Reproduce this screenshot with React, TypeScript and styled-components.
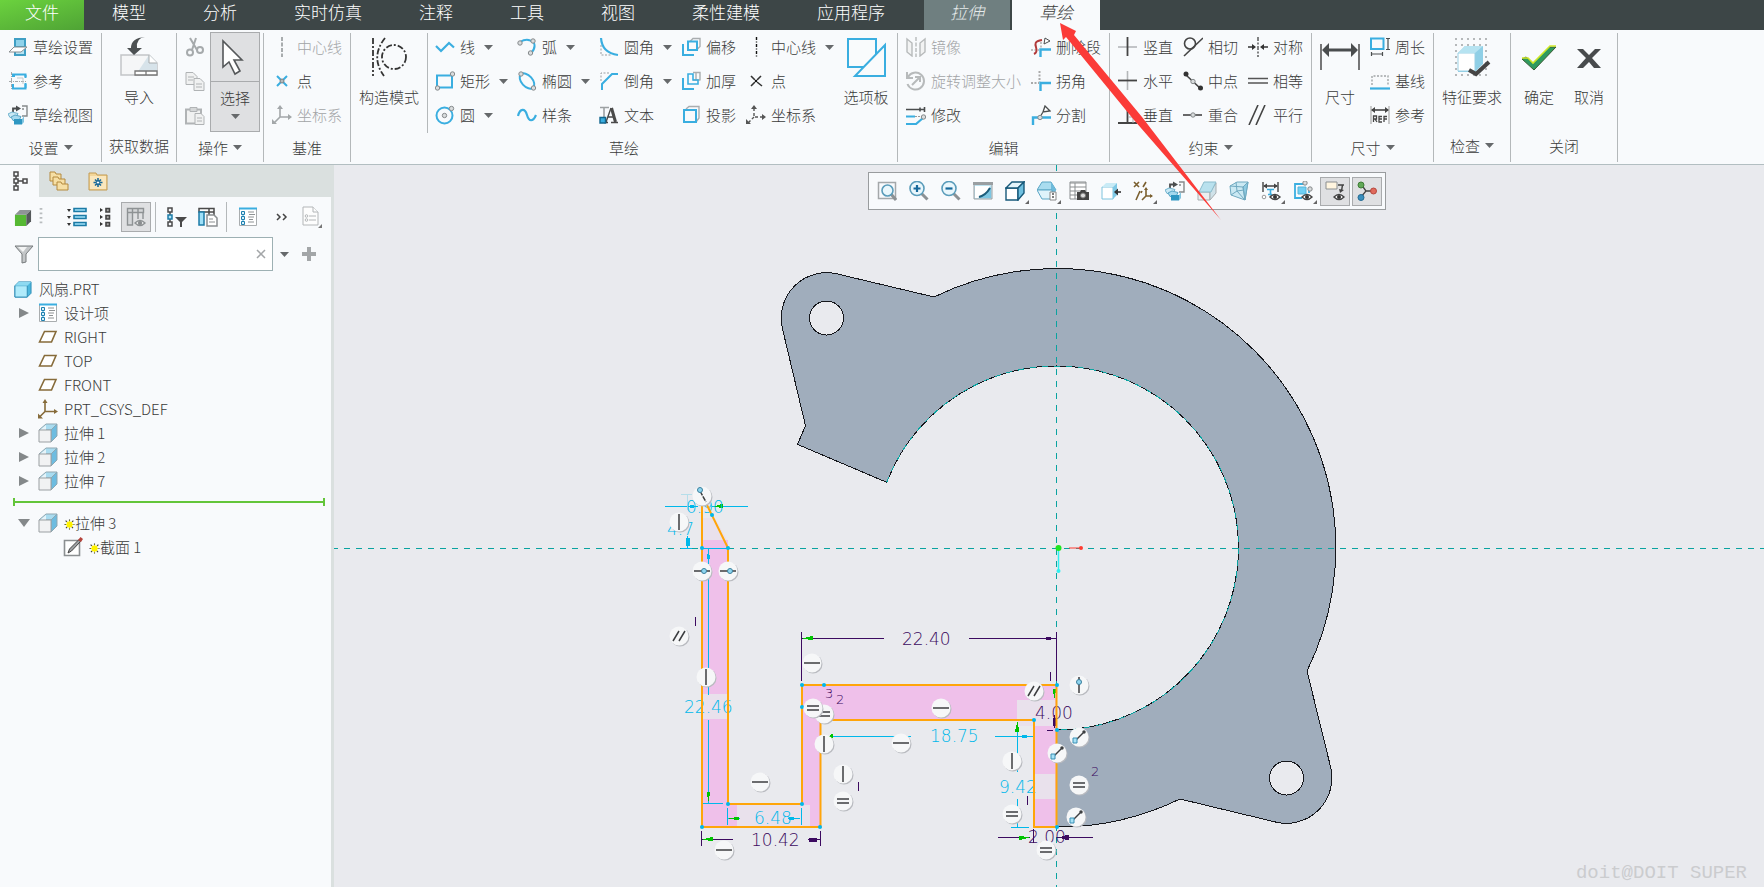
import React from "react";
import styled, { createGlobalStyle, css } from "styled-components";

const INK = "#4a4d4e";
const BLUE = "#3aaee0";
const TEAL = "#0aa3a0";
const PURPLE = "#3c0a60";
const CYAN = "#00b8ea";
const ORANGE = "#ffa50a";
const GREEN = "#00c400";

const GlobalStyle = createGlobalStyle`
  * { box-sizing: border-box; }
  body {
    margin: 0;
    background: #e9eaee;
    color: #3a3a3a;
    font-family: "Noto Sans CJK SC", "Noto Sans", sans-serif;
    font-size: 15px;
    font-weight: 300;
    line-height: 24px;
  }
  button, input { font: inherit; color: inherit; }
  button {
    margin: 0;
    padding: 0;
    border: 0;
    background: none;
    cursor: pointer;
    white-space: nowrap;
  }
  svg { display: block; flex: none; }
`;

/* ---------- icons ---------- */

const cube = (front: string, top: string, side: string, edge: string) => (
  <g stroke={edge} strokeWidth="1.400">
    <path d="M1 7h12v12H1z" fill={front} />
    <path d="M1 7l6-6h12l-6 6z" fill={top} />
    <path d="M13 7l6-6v11l-6 7z" fill={side} />
  </g>
);

const extrudeCube = (
  <g strokeWidth="1">
    <path d="M13 7l6-6v12l-6 6z" fill="#6dbce0" stroke="#8fa7b1" />
    <path d="M1 7l7-6h11l-6 6z" fill="#a9dcf0" stroke="#8fa7b1" />
    <path d="M2 7l6-5v5z" fill="#e6f4f9" />
    <path d="M1 7h12v12H1z" fill="#f1f2f3" stroke="#9a9fa2" />
  </g>
);

const eye = (
  <g>
    <path d="M9 16q5-5 10 0q-5 5-10 0z" fill="#fff" stroke="#444" strokeWidth="1.4" />
    <circle cx="14" cy="16" r="2" fill="#333" />
  </g>
);

const viewCubes = (
  <g fill="none">
    <path d="M5 7V3.500h5" stroke={INK} strokeWidth="1.800" />
    <path d="M8 0.500l5 3-5 3z" fill={INK} />
    <path d="M14 1h5v10h-5M14 4h2" stroke="#85898b" strokeWidth="1.4" />
    <path d="M0 9l4-2 6 1.500-2 4H2z" fill="#c9e8f4" stroke="#6fb2cd" />
    <path d="M3 12l4-2 6 1.500-2 4H5z" fill="#a5d9ee" stroke="#5ba6c5" />
    <path d="M6 14h8v5.500H6z" fill="#2f97c2" />
    <path d="M14 14l2-3v6l-2 2.500z" fill="#82c5e0" />
  </g>
);

const ball = (x: number, y: number) => (
  <circle cx={x} cy={y} r="2.2" fill="#d9dcdd" stroke="#85898b" strokeWidth="1" />
);

const magnifier = (
  <g fill="none">
    <path d="M12 12l6.500 6.500" stroke="#8c9194" strokeWidth="3" />
    <circle cx="8" cy="7.500" r="7" fill="#eaf7fc" stroke="#5a9cba" strokeWidth="1.6" />
  </g>
);

const designList = (
  <g>
    <path d="M1.500 1.500h17v17h-17z" fill="#fff" stroke="#a9adaf" />
    <path d="M1 1.500h18" stroke={BLUE} strokeWidth="2" />
    <path d="M5 4v13" stroke={BLUE} />
    <path d="M3.500 4.500h3v3h-3zM3.500 9.500h3v3h-3zM3.500 14.500h3v3h-3z" fill="#d8f1fb" stroke="#1e7fae" />
    <path d="M10 5h6M11 7.500h6M10 10h6M11 12.500h4M10 15h6" stroke="#8e9294" />
  </g>
);

const ICONS: Record<string, React.ReactNode> = {
  sketchSetup: (
    <g>
      <path d="M6 1h12v18H6z" fill="#3f9fc4" />
      <path d="M8 3h8v6H8z" fill="#8fd2ea" />
      <path d="M8 13h8v4H8z" fill="#b8e3f2" />
      <path d="M1 15l5-5h13l-6 5z" fill="#fff" stroke="#8b8f91" />
    </g>
  ),
  reference: (
    <g fill="none">
      <path d="M3.500 1v18M1 10.500h18" stroke="#a4a8aa" strokeDasharray="3 1 1 1" />
      <path d="M5 6V3.500h12.500V6M5 13v4.500h12.500V13" stroke={BLUE} strokeWidth="2" />
      <path d="M17.500 4v3M17.500 12v5M6 4v2" stroke={BLUE} strokeWidth="2" />
      <path d="M9 7h6v6" stroke="#c5c9cb" />
    </g>
  ),
  views: viewCubes,
  cut: (
    <g fill="none" stroke="#a6aaac" strokeWidth="2">
      <path d="M5 1l7 12M11 1l-4 12" />
      <circle cx="5" cy="15.500" r="3" />
      <circle cx="15" cy="13" r="3" />
    </g>
  ),
  copy: (
    <g fill="#f0f1f1" stroke="#b0b3b5">
      <path d="M1 1.500h7l4 4v8H1z" />
      <path d="M9 7.500h6l4 4v8H9z" />
      <path d="M3 6h6M3 9h5M11 13h6M11 16h6" />
    </g>
  ),
  paste: (
    <g fill="#f0f1f1" stroke="#b0b3b5">
      <path d="M1 4.500h15v14H1z" strokeWidth="2" />
      <path d="M5 2.500h7v4H5z" fill="#d5d7d8" />
      <path d="M10 8.500h6l3 3v8h-9z" />
      <path d="M12 13h5M12 16h5" />
    </g>
  ),
  centerDash: <path d="M10 0v20" stroke="#a8acae" strokeWidth="2" strokeDasharray="4 1.500" />,
  centerLine: <path d="M10.500 0v20" stroke="#111" strokeWidth="1.400" strokeDasharray="3 1.500 1 1.500" />,
  bluePoint: (
    <g strokeWidth="2" stroke={BLUE}>
      <path d="M5 5l10 10M15 5L5 15" />
      <circle cx="10" cy="10" r="2" fill="#b5b9bb" stroke="#7e8385" strokeWidth="1" />
    </g>
  ),
  point: (
    <g strokeWidth="1.600" stroke="#333">
      <path d="M5 5l4 4M11 11l5 4M15 5l-4 4M9 11l-4 4" />
      <path d="M9 9h2v2H9z" fill="#111" stroke="none" />
    </g>
  ),
  csysGrey: (
    <g fill="none" stroke="#a3a7a9" strokeWidth="1.600">
      <path d="M8 3v9h9M8 12l-6 6" />
      <path d="M8 0l3 4H5zM20 12l-4-3v6zM0 19v-5l5 5z" fill="#a3a7a9" stroke="none" />
    </g>
  ),
  csys: (
    <g fill="none" stroke="#555" strokeWidth="1.400">
      <path d="M8 3v9h9M8 12l-6 6" strokeDasharray="3 2" />
      <path d="M8 0l3 4H5zM20 12l-4-3v6zM0 19v-5l5 5z" fill="#555" stroke="none" />
    </g>
  ),
  csysBrown: (
    <g fill="none" stroke="#866b3a" strokeWidth="1.600">
      <path d="M7 3v9.500h10M7 12.500l-6 6" />
      <path d="M7 0l2.500 4h-5zM20 12.500l-4-2.500v5zM0 19.500v-5l5 5z" fill="#866b3a" stroke="none" />
    </g>
  ),
  line: <path d="M1 9l5 5 8-8 5 4.500" fill="none" stroke={BLUE} strokeWidth="2.200" />,
  rect: (
    <g>
      <path d="M2 4.500h15v12H2z" fill="none" stroke={BLUE} strokeWidth="2" />
      {ball(17.5, 3)}
      {ball(2.5, 17)}
    </g>
  ),
  circle: (
    <g>
      <circle cx="9.500" cy="10.500" r="8" fill="none" stroke={BLUE} strokeWidth="2" />
      {ball(9.5, 10.5)}
      {ball(16.5, 3.5)}
    </g>
  ),
  arc: (
    <g>
      <path d="M3 5q8-5 14 1q2 5-3 10" fill="none" stroke={BLUE} strokeWidth="2" />
      {ball(3, 6)}
      {ball(16, 4)}
      {ball(13.5, 16)}
    </g>
  ),
  ellipse: (
    <g>
      <ellipse cx="10" cy="10" rx="9" ry="5.500" transform="rotate(48 10 10)" fill="none" stroke={BLUE} strokeWidth="2" />
      {ball(4, 3)}
      {ball(16.5, 17)}
    </g>
  ),
  spline: <path d="M1 11c2-8 7-8 9-1s6 7 9 0" fill="none" stroke={BLUE} strokeWidth="2.200" />,
  fillet: (
    <g fill="none">
      <path d="M2 8v10h10" stroke="#999da0" strokeDasharray="2 1.500" />
      <path d="M2 1q1 15 17 17" stroke={BLUE} strokeWidth="2.200" />
    </g>
  ),
  chamfer: (
    <g fill="none">
      <path d="M2 10V2h8" stroke="#999da0" strokeDasharray="2 1.500" />
      <path d="M3 19v-6L13 3h6" stroke={BLUE} strokeWidth="2" />
    </g>
  ),
  textTool: (
    <g fill="none">
      <path d="M1 2.500h9M5 2.500v10" stroke="#9da1a3" strokeWidth="1.600" />
      <path d="M7 17L12 3M9 12h6M5 17.500h4M12 17.500h7" stroke="#4a4a4a" strokeWidth="1.400" />
      <path d="M12.500 3l4 14" stroke="#4a4a4a" strokeWidth="3" />
      <path d="M1 12.500h5.500V18H1z" fill={BLUE} stroke="#13678f" strokeWidth="1.400" />
    </g>
  ),
  offset: (
    <g fill="none">
      <path d="M9 4.500l3-3h7v8l-3 3" stroke="#a9adaf" strokeWidth="1.400" />
      <path d="M7 4.500h9V13H7z" stroke={BLUE} strokeWidth="2" />
      <path d="M2 7v11h11" stroke={BLUE} strokeWidth="2" />
    </g>
  ),
  thicken: (
    <g fill="none">
      <path d="M12 1.500h7v8M15 2v7M12 9h7" stroke="#a9adaf" strokeWidth="1.400" />
      <path d="M7 3v10h10V9h-5V3z" stroke={BLUE} strokeWidth="1.600" />
      <path d="M2 7v11h11" stroke={BLUE} strokeWidth="2" />
    </g>
  ),
  project: (
    <g fill="none">
      <path d="M5 4l3-2.500h10V13l-3 4" stroke="#a9adaf" strokeWidth="1.400" />
      <path d="M3 5h12v12H3z" stroke={BLUE} strokeWidth="2" />
    </g>
  ),
  mirror: (
    <g fill="#f2f3f3" stroke="#b7babb" strokeWidth="1.400">
      <path d="M1 2l5 4v13l-5-4zM19 2l-5 4v13l5-4z" />
      <path d="M10 0v20" strokeDasharray="4 1.500" />
    </g>
  ),
  rotate: (
    <g fill="none" stroke="#b7babb" strokeWidth="2">
      <path d="M2 6a8.500 8.500 0 1 1-.5 7" />
      <path d="M1 1v6h6M6 14l8-8M9 6h5v5" />
    </g>
  ),
  modify: (
    <g fill="none">
      <path d="M0 4.500h18M18.500 2v5M14 2.500v4" stroke={INK} strokeWidth="1.600" />
      <path d="M0 11.500h9M0 19h10l7-6" stroke={BLUE} strokeWidth="2.200" />
      <path d="M9 11.500h8" stroke="#999" strokeDasharray="2 1" />
      {ball(17.5, 12)}
    </g>
  ),
  deleteSeg: (
    <g fill="none">
      <path d="M0 13h8M10 5v6" stroke="#aaa" strokeDasharray="2 1.500" strokeWidth="1.400" />
      <path d="M3 17c8-4-6-12 8-14" stroke="#b23a3a" strokeWidth="2" />
      <path d="M20 12.500H9.500V20" stroke={BLUE} strokeWidth="2.400" />
      <path d="M14 1l5 3-6 3z" fill="#fff" stroke={INK} />
    </g>
  ),
  corner: (
    <g fill="none">
      <path d="M0 12h8M8.500 0v11" stroke="#aaa" strokeDasharray="2 1.500" strokeWidth="2" />
      <path d="M20 12H9.500v8" stroke={BLUE} strokeWidth="2.400" />
    </g>
  ),
  divide: (
    <g fill="none">
      <path d="M20 12.500H2V20" stroke={BLUE} strokeWidth="2.400" />
      <path d="M14 1l5 5-7 1zM12 7l-3 5" fill="#fff" stroke={INK} strokeWidth="1.300" />
      {ball(9, 12.5)}
    </g>
  ),
  vertical: (
    <g>
      <path d="M0 10h19" stroke="#b4b7b9" strokeWidth="1.600" />
      <path d="M9.500 0v19" stroke="#444" strokeWidth="1.800" />
    </g>
  ),
  horizontal: (
    <g>
      <path d="M9.500 0v19" stroke="#b4b7b9" strokeWidth="1.600" />
      <path d="M0 9.500h19" stroke="#444" strokeWidth="1.800" />
    </g>
  ),
  perpendicular: (
    <g fill="none">
      <path d="M0 18h19M9.500 1v17" stroke="#444" strokeWidth="1.800" />
      <path d="M10 12h5v6" stroke="#a5a9ab" />
    </g>
  ),
  tangent: (
    <g fill="none" stroke="#444" strokeWidth="1.600">
      <circle cx="7" cy="6.500" r="5.500" />
      <path d="M1 19L20 1" />
    </g>
  ),
  midpoint: (
    <g>
      <path d="M3 4l15 14" stroke="#444" strokeWidth="1.600" />
      <circle cx="3" cy="3" r="2.500" fill="#333" />
      <circle cx="17.500" cy="17" r="2.500" fill="#333" />
      {ball(10, 10.5)}
    </g>
  ),
  coincident: (
    <g>
      <path d="M0 10h19" stroke="#444" strokeWidth="1.600" />
      {ball(10, 10)}
    </g>
  ),
  symmetric: (
    <g stroke="#333" strokeWidth="1.600">
      <path d="M10 0v20" strokeDasharray="4 1.500 2 1.500" strokeWidth="1.200" />
      <path d="M0 10h6M14 10h6" />
      <path d="M8 10L4 7v6zM12 10l4-3v6z" fill="#333" stroke="none" />
    </g>
  ),
  equal: <path d="M0 7.500h20M0 12h20" stroke="#555" strokeWidth="1.600" />,
  parallel: <path d="M1 20L10 0M8 20L17 0" stroke="#444" strokeWidth="1.600" />,
  perimeter: (
    <g fill="none">
      <path d="M1 1.500h12.500V12H1z" stroke={BLUE} strokeWidth="2" />
      <path d="M18 1v12M16 1.500h4M16 12.500h4M1 17h12M1.500 15v4M12.500 15v4" stroke={INK} strokeWidth="1.200" />
    </g>
  ),
  baseline: (
    <g>
      <path d="M2 14V5h16v9" fill="none" stroke="#a0a4a6" strokeDasharray="2 1.500" strokeWidth="1.400" />
      <path d="M0 17.500h20" stroke={BLUE} strokeWidth="2.200" />
    </g>
  ),
  refDim: (
    <g fill="none" stroke="#444">
      <path d="M1 1v18M19 1v18" stroke="#999" />
      <path d="M2 5h16" strokeWidth="1.600" />
      <path d="M1 5l4-3v6zM19 5l-4-3v6z" fill="#444" stroke="none" />
      <path d="M3.500 17v-6h3v3h-3M5 14l2 3M12 11.500H9V17h3M9 14h3M17 11.500h-3V17M14 14h3" strokeWidth="1.300" />
    </g>
  ),
  zoomFit: (
    <g>
      <path d="M1.500 1.500h17v16h-17z" fill="none" stroke="#a4a8aa" strokeWidth="1.500" />
      <path d="M14 13l5 6" stroke="#8c9194" strokeWidth="3" />
      <circle cx="10.500" cy="9.500" r="5.500" fill="#eaf7fc" stroke="#5a9cba" strokeWidth="1.600" />
    </g>
  ),
  zoomIn: (
    <g>
      {magnifier}
      <path d="M4.500 7.500h7M8 4v7" stroke="#17699b" strokeWidth="2.200" />
    </g>
  ),
  zoomOut: (
    <g>
      {magnifier}
      <path d="M4.500 7.500h7" stroke="#17699b" strokeWidth="2.200" />
    </g>
  ),
  refit: (
    <g>
      <path d="M1 2h18v16H1z" fill="#bfe3f0" stroke="#9a9fa2" />
      <path d="M0 2.500h20" stroke="#9a9fa2" strokeWidth="3" />
      <path d="M2 5h15Q12 15 6 17H2z" fill="#fff" />
      <path d="M5 17q8-3 13-11v11z" fill="#7cc6e2" />
      <path d="M6 16q7-2 11-9" fill="none" stroke="#1d5d7a" strokeWidth="2" />
    </g>
  ),
  shadedBox: <g>{cube("#fff", "#e4f5fb", "#6fc0e0", "#17597a")}</g>,
  savedView: (
    <g>
      <path d="M5 1h9l5 8H0z" fill="#a9dcef" stroke="#5ba6c5" />
      <path d="M14 1l5 8-3 9-2-9z" fill="#6dbadb" />
      <path d="M0 9h15v9H5z" fill="#dff3fa" stroke="#5ba6c5" />
      <path d="M13 11h6v8h-6z" fill="#fff" stroke="#888" />
      <path d="M15 13h2M15 16h2" stroke="#555" strokeWidth="1.500" />
    </g>
  ),
  camera: (
    <g>
      <path d="M1 1h16v17H1z" fill="#fff" stroke="#8b8f91" />
      <path d="M1 2h16M1 6h16M1 10h16M1 14h8M6 2v16" fill="none" stroke="#8b8f91" />
      <path d="M8 11h3l1-2h4l1 2h3v8H8z" fill="#444" />
      <circle cx="14" cy="14.500" r="2.500" fill="#ddd" stroke="#777" />
    </g>
  ),
  boxArrow: (
    <g>
      <path d="M1 6h11v12H1z" fill="#fff" stroke="#7fc4de" />
      <path d="M1 6l4-4h11l-4 4z" fill="#c9ebf6" />
      <path d="M12 6l4-4v12l-4 4z" fill="#7fc9e6" />
      <path d="M14 11h6" stroke="#333" strokeWidth="1.600" />
      <path d="M13 11l4-3.500v7z" fill="#333" />
    </g>
  ),
  datum: (
    <g stroke="#7a5f2f" strokeWidth="1.600" fill="none">
      <path d="M1 1l5 5M6 1L1 6M13 1l-3 5M7 10l-4 9" />
      <path d="M13 8v7h6M13 15l-4 4M9 10l-1 2" />
      <path d="M13 6l2 3h-4zM20 15l-3-2v4z" fill="#7a5f2f" stroke="none" />
    </g>
  ),
  ghostBox: (
    <g>
      <path d="M1 11h12v8H1z" fill="#eceef0" stroke="#a7adb0" />
      <path d="M13 11l6-9v10l-6 7z" fill="#cfe2e9" stroke="#a7adb0" />
      <path d="M7 1h12l-5 10H2z" fill="#b9e1ee" stroke="#8bbccc" />
    </g>
  ),
  glassBox: (
    <g stroke="#6fa9c0">
      <path d="M1 5l7-4h11l-3 18-14-5z" fill="#cbe9f3" />
      <path d="M14 6l5-5-3 18z" fill="#8fcbe2" />
      <path d="M1 5l13 1 2 13M7 1l1 9 7 8M2 14l6-4 7-1" fill="none" />
    </g>
  ),
  dimEye: (
    <g>
      <path d="M2 1v10M17 1v10M3 5h13" stroke="#444" strokeWidth="1.400" />
      <path d="M2 5l4-2.500v5zM17 5l-4-2.500v5z" fill="#444" />
      <path d="M6 8.500h7M9.500 8.500V14M7 13.500h4" stroke={BLUE} strokeWidth="1.600" />
      <circle cx="3" cy="16" r="1.800" fill="#fff" stroke="#999" />
      {eye}
    </g>
  ),
  constraintEye: (
    <g fill="none">
      <path d="M12 3H2v14h7M16 6v6" stroke={BLUE} strokeWidth="1.800" />
      <path d="M5 6h8v7H5z" fill="#6fd0f5" stroke="#58b3d6" />
      {ball(12, 2)}
      {ball(17, 8)}
      {eye}
    </g>
  ),
  annotEye: (
    <g fill="none">
      <path d="M1 1h11v7H1z" fill="#fff5df" stroke="#8b8f91" />
      <path d="M13 4h6M17.500 4l-1 6" stroke="#444" strokeWidth="1.500" />
      <path d="M14 8l5 1-4 3z" fill="#444" />
      {eye}
    </g>
  ),
  spin: (
    <g>
      <path d="M4 3l5 7-5 6M9 10h7" fill="none" stroke="#444" strokeWidth="1.300" />
      <circle cx="4" cy="4" r="3" fill="#62a957" stroke="#3e7c36" />
      <circle cx="16.500" cy="10" r="3" fill="#e06a5c" stroke="#b5483c" />
      <circle cx="4" cy="16.500" r="3" fill="#3a8fbd" stroke="#236a92" />
    </g>
  ),
  treeTab: (
    <g fill="none" stroke="#4a4a4a" strokeWidth="1.500">
      <path d="M4 1h4v4H4zM4 8h4v4H4zM4 15h4v4H4zM13 8h4v4h-4zM6 5v3M6 12v3M8 10h5" />
    </g>
  ),
  folders: (
    <g stroke="#b48a3e" fill="#f6dfa4">
      <path d="M1 1h5l1 2h5v7H1z" />
      <path d="M4 6h5l1 2h6v6H4z" />
      <path d="M8 11h4l1 2h6v6H8z" />
    </g>
  ),
  favFolder: (
    <g>
      <path d="M1 2h7l1 2h10v15H1z" fill="#f3d699" stroke="#c39b52" />
      <path d="M2 5h16v13H2z" fill="#fae7bd" />
      <path d="M10 7v9M5.500 11.500h9M7 8.500l6 6M13 8.500l-6 6" stroke="#1b6a98" strokeWidth="1.600" />
      <circle cx="10" cy="11.500" r="1.600" fill="#fff" stroke="#1b6a98" />
    </g>
  ),
  greenBox: (
    <g>
      <path d="M1 7h12v12H1z" fill="#56b833" />
      <path d="M1 7l5-5h12l-5 5z" fill="#8f9496" />
      <path d="M13 7l5-5v12l-5 5z" fill="#55595b" />
    </g>
  ),
  dots: <path d="M10 0v20" stroke="#b9bdbf" strokeWidth="3" strokeDasharray="2 3" />,
  expandAll: (
    <g>
      <path d="M0 2h4L2 5zM0 9h4l-2 3zM0 16h4l-2 3z" fill="#333" />
      <path d="M7 1.500h12v3H7zM7 8.500h12v3H7zM7 15.500h12v3H7z" fill="#9fe0f8" stroke="#1c7ba6" strokeWidth="1.600" />
    </g>
  ),
  collapseAll: (
    <g>
      <path d="M5 1l3 2-3 2zM5 8l3 2-3 2zM5 15l3 2-3 2z" fill="#333" />
      <path d="M11 1.500h3.500v3.500H11zM11 8.500h3.500V12H11zM11 15.500h3.500V19H11z" fill="#aaa" stroke="#444" strokeWidth="1.600" />
    </g>
  ),
  columnsEye: (
    <g fill="none" stroke="#8e9294" strokeWidth="1.400">
      <path d="M1.500 1.500h16v4h-16zM1.500 5v13h5V5M12 2v10M17 5v7M6.500 2v4" fill="#d4d6d8" />
      <path d="M9 16q5-5 10 0q-5 5-10 0z" fill="#eee" />
      <circle cx="14" cy="16" r="1.500" fill="#888" />
    </g>
  ),
  treeFilter: (
    <g fill="none" stroke="#4a4a4a" strokeWidth="1.500">
      <path d="M1 1h4v4H1zM1 15h4v4H1zM3 5v3M3 12v3" />
      <path d="M1 8h4v4H1z" fill="#aee4f8" stroke="#1c7ba6" />
      <path d="M8 10h12l-5 5v5h-2v-5z" fill="#4a4a4a" stroke="none" />
    </g>
  ),
  treeColumns: (
    <g fill="#fff" stroke="#4a4a4a" strokeWidth="1.500">
      <path d="M1 1.500h15V5H1zM11 2v6M16 2v6" />
      <path d="M1 5h5v13H1z" fill="#9fe0f8" stroke="#1c7ba6" />
      <path d="M9 8h7l3 3v8H9z" stroke="#8b8f91" />
      <path d="M11 12h4M11 15h6" stroke="#8b8f91" strokeWidth="1" />
    </g>
  ),
  designItems: designList,
  report: (
    <g fill="#fdfdfd" stroke="#b3b6b8">
      <path d="M2 1h10l5 5v13H2z" />
      <path d="M12 1v5h5M8 10h7M8 14h7" />
      <circle cx="5.500" cy="10" r="1.300" />
      <circle cx="5.500" cy="14" r="1.300" />
    </g>
  ),
  funnel: (
    <g>
      <path d="M1 2h18l-7 8v8l-4 1v-9z" fill="#c3c6c8" stroke="#777b7d" />
      <path d="M4 3h9l-4 5z" fill="#f3f4f4" />
    </g>
  ),
  part: (
    <g stroke="#2d8db5">
      <path d="M1 6l4-4h13v12l-4 4H1z" fill="#4db8de" />
      <path d="M1 6h13v12H1z" fill="#b0ebfb" />
      <path d="M1 6l4-4h13l-4 4z" fill="#8edaf2" stroke="none" />
    </g>
  ),
  plane: <path d="M1.500 15L6.500 4.500h11.500L13.500 15z" fill="#fff" stroke="#866b3a" strokeWidth="1.600" />,
  extrude: extrudeCube,
  sketch: (
    <g>
      <path d="M1.500 3.500h15v15h-15z" fill="#fff" stroke="#8b8f91" strokeWidth="1.600" />
      <path d="M5 16l1.500-4L15.500 3l2 1.500L8.500 14z" fill="#9da1a3" stroke="#444" />
      <path d="M15 3l2.500-3L20 2l-2 3z" fill="#b5443c" />
    </g>
  ),
  star: (
    <g>
      <path d="M10 1v18M1 10h18M3 3l14 14M17 3L3 17" stroke="#333" strokeWidth="2" strokeDasharray="3 1" />
      <path d="M5 5h10v10H5zM10 2l3 8-3 8-3-8zM2 10l8-3 8 3-8 3z" fill="#fff200" />
    </g>
  ),
  importBig: (
    <g>
      <path d="M2 18h28l8 8v12H2z" fill="#f5f6f7" stroke="#c2c5c7" strokeWidth="1.500" />
      <path d="M30 18l8 8v8L18 36z" fill="#d7e3ea" />
      <path d="M30 18v8h8" fill="#fff" stroke="#a7abad" />
      <path d="M16 34h22v4H16zM27 34v4" fill="#fff" stroke="#777" strokeWidth="1.300" />
      <path d="M26 0q-9 1-8 11h5l-8 7-7-7h4q0-10 14-11z" fill="#4c5052" />
    </g>
  ),
  selectBig: (
    <path d="M8 4v26l6-5 6 12 5-3-6-11h8z" fill="#fff" stroke="#55585a" strokeWidth="1.600" />
  ),
  constructBig: (
    <g fill="none" stroke="#333" strokeWidth="1.800" strokeDasharray="6 2 2 2">
      <path d="M4 1v38M16 1Q1 20 15 39" />
      <circle cx="25" cy="20" r="12" />
    </g>
  ),
  paletteBig: (
    <g fill="#f9fbfc" stroke={BLUE} strokeWidth="2">
      <path d="M2 2h28v28H2z" />
      <path d="M39 8v31H9z" />
    </g>
  ),
  dimBig: (
    <g>
      <path d="M1 7v26M39 7v26" stroke="#555" strokeWidth="1.600" />
      <path d="M8 13h24" stroke="#4a4d4e" strokeWidth="3" />
      <path d="M2 13l7-7v14zM38 13l-7-7v14z" fill="#4a4d4e" />
    </g>
  ),
  checkReqBig: (
    <g>
      <path d="M3 2h36M3 8h36M3 14h36M3 20h36M3 26h36M3 32h36M3 38h36" stroke="#b5b8ba" strokeWidth="2" strokeDasharray="2 4" />
      <path d="M6 16l7-7h18v18l-8 8H6z" fill="#8fcfe6" />
      <path d="M6 16h17v18H6z" fill="#fff" stroke="#9ad0e4" />
      <path d="M6 16l7-7h18l-8 7z" fill="#b6e3f1" />
      <path d="M17 33l7 4 13-12" fill="none" stroke="#444" strokeWidth="4" />
    </g>
  ),
  okBig: (
    <g>
      <path d="M3 22l4-2 7 6L30 10h7L15 33z" fill="#2f9a5f" stroke="#3a5a33" strokeWidth="1" />
      <path d="M3 21h6l5 5L31 9h6" fill="none" stroke="#cfe82a" strokeWidth="1.600" />
    </g>
  ),
  cancelBig: <path d="M8 12h6l6 6 6-6h6l-9 9 9 10h-7l-5-6-6 6H8l9-10z" fill="#484b4d" />,
};

const Icon = ({ name, size = 20, box = 20 }: { name: string; size?: number; box?: number }) => (
  <svg width={size} height={size} viewBox={`0 0 ${box} ${box}`} aria-hidden="true">
    {ICONS[name]}
  </svg>
);

const Caret = () => (
  <svg width="9" height="5" viewBox="0 0 9 5" aria-hidden="true">
    <path d="M0 0h9L4.500 5z" fill="#66696b" />
  </svg>
);

/* ---------- tab bar ---------- */

const Page = styled.div`
  position: relative;
  display: flex;
  flex-direction: column;
  min-height: 100vh;
  overflow: hidden;
`;

const TabBar = styled.nav`
  display: flex;
  height: 30px;
  gap: 1px;
  background: #3d4647;
`;

type TabKind = "file" | "plain" | "context" | "active";

const Tab = styled.button<{ $kind: TabKind }>`
  padding: 0 28px 6px;
  font-size: 17px;
  line-height: 24px;
  color: #fff;
  ${(p) => p.$kind === "file" && css`
    margin-right: -1px;
    padding: 0 25px 6px;
    background: linear-gradient(165deg, #6bd23e, #4fa335);
  `}
  ${(p) => p.$kind === "context" && css`
    margin: 0 1px 0 10px;
    padding: 0 26px 6px;
    background: #6f7f80;
    color: #e6ebeb;
    font-style: italic;
  `}
  ${(p) => p.$kind === "active" && css`
    padding: 0 27px 6px;
    background: #f8fafc;
    color: #3a3a3a;
    font-style: italic;
  `}
`;

const TABS: [string, TabKind][] = [
  ["文件", "file"], ["模型", "plain"], ["分析", "plain"], ["实时仿真", "plain"],
  ["注释", "plain"], ["工具", "plain"], ["视图", "plain"], ["柔性建模", "plain"],
  ["应用程序", "plain"], ["拉伸", "context"], ["草绘", "active"],
];

/* ---------- ribbon ---------- */

const Ribbon = styled.header`
  display: flex;
  height: 135px;
  background: #f8fafc;
  border-bottom: 1px solid #b2bec1;
`;

const Group = styled.section<{ $width: number }>`
  flex: none;
  display: flex;
  flex-direction: column;
  width: ${(p) => p.$width}px;
  margin: 3px 0 2px;
  border-right: 1px solid #b4b8ba;
`;

const GroupBody = styled.div<{ $center?: boolean; $tight?: boolean }>`
  display: flex;
  height: 100px;
  gap: ${(p) => (p.$tight ? 5 : 0)}px;
  padding: 0 ${(p) => (p.$tight ? 3 : 8)}px;
  justify-content: ${(p) => (p.$center ? "center" : "flex-start")};
`;

const GroupLabel = styled.button`
  display: flex;
  align-items: center;
  justify-content: center;
  gap: 5px;
  height: 34px;
`;

const ToolColumn = styled.div<{ $width?: number }>`
  flex: none;
  display: flex;
  flex-direction: column;
  margin-top: -2px;
  width: ${(p) => (p.$width ? `${p.$width}px` : "auto")};
`;

const Tool = styled.button<{ $off?: boolean }>`
  display: flex;
  align-items: center;
  gap: 5px;
  height: 32px;
  margin-bottom: 2px;
  color: ${(p) => (p.$off ? "#a2a4a6" : "inherit")};
  svg + span + svg { margin-left: 4px; }
`;

const BigTool = styled.button<{ $width: number }>`
  flex: none;
  display: flex;
  flex-direction: column;
  align-items: center;
  gap: 8px;
  width: ${(p) => p.$width}px;
  height: 80px;
  padding-top: 4px;
`;

const SelectTool = styled.button`
  flex: none;
  display: flex;
  flex-direction: column;
  align-items: center;
  width: 50px;
  height: 100px;
  margin: -1px 0 0 5px;
  border: 1px solid #a9abad;
  background: #dfe0e2;
`;

const SelectFace = styled.span`
  display: flex;
  justify-content: center;
  width: 100%;
  height: 49px;
  margin-bottom: 4px;
  padding-top: 4px;
  border-bottom: 1px solid #a9abad;
`;

const SelectLabel = styled.span`
  margin-bottom: 4px;
`;

const ConstructSlot = styled.div`
  flex: none;
  display: flex;
  justify-content: center;
  width: 77px;
  margin: 0 7px 0 -8px;
  border-right: 1px solid #b4b8ba;
`;

type ToolDef = { icon: string; label: string; off?: boolean; menu?: boolean };

const Tools = ({ items, width }: { items: ToolDef[]; width?: number }) => (
  <ToolColumn $width={width}>
    {items.map((t) => (
      <Tool key={t.label} $off={t.off} disabled={t.off}>
        <Icon name={t.icon} />
        <span>{t.label}</span>
        {t.menu && <Caret />}
      </Tool>
    ))}
  </ToolColumn>
);

const Big = ({ icon, label, width }: { icon: string; label: string; width: number }) => (
  <BigTool $width={width}>
    <Icon name={icon} size={40} box={40} />
    <span>{label}</span>
  </BigTool>
);

const RibbonBar = () => (
  <Ribbon>
    <Group $width={102}>
      <GroupBody>
        <Tools items={[
          { icon: "sketchSetup", label: "草绘设置" },
          { icon: "reference", label: "参考" },
          { icon: "views", label: "草绘视图" },
        ]} />
      </GroupBody>
      <GroupLabel>设置 <Caret /></GroupLabel>
    </Group>
    <Group $width={75}>
      <GroupBody $center><Big icon="importBig" label="导入" width={60} /></GroupBody>
      <GroupLabel>获取数据</GroupLabel>
    </Group>
    <Group $width={87}>
      <GroupBody>
        <ToolColumn>
          <Tool aria-label="剪切"><Icon name="cut" /></Tool>
          <Tool aria-label="复制"><Icon name="copy" /></Tool>
          <Tool aria-label="粘贴"><Icon name="paste" /></Tool>
        </ToolColumn>
        <SelectTool>
          <SelectFace><Icon name="selectBig" size={40} box={40} /></SelectFace>
          <SelectLabel>选择</SelectLabel>
          <Caret />
        </SelectTool>
      </GroupBody>
      <GroupLabel>操作 <Caret /></GroupLabel>
    </Group>
    <Group $width={87}>
      <GroupBody>
        <Tools items={[
          { icon: "centerDash", label: "中心线", off: true },
          { icon: "bluePoint", label: "点" },
          { icon: "csysGrey", label: "坐标系", off: true },
        ]} />
      </GroupBody>
      <GroupLabel>基准</GroupLabel>
    </Group>
    <Group $width={547}>
      <GroupBody>
        <ConstructSlot><Big icon="constructBig" label="构造模式" width={76} /></ConstructSlot>
        <Tools width={82} items={[
          { icon: "line", label: "线", menu: true },
          { icon: "rect", label: "矩形", menu: true },
          { icon: "circle", label: "圆", menu: true },
        ]} />
        <Tools width={82} items={[
          { icon: "arc", label: "弧", menu: true },
          { icon: "ellipse", label: "椭圆", menu: true },
          { icon: "spline", label: "样条" },
        ]} />
        <Tools width={82} items={[
          { icon: "fillet", label: "圆角", menu: true },
          { icon: "chamfer", label: "倒角", menu: true },
          { icon: "textTool", label: "文本" },
        ]} />
        <Tools width={65} items={[
          { icon: "offset", label: "偏移" },
          { icon: "thicken", label: "加厚" },
          { icon: "project", label: "投影" },
        ]} />
        <Tools width={93} items={[
          { icon: "centerLine", label: "中心线", menu: true },
          { icon: "point", label: "点" },
          { icon: "csys", label: "坐标系" },
        ]} />
        <Big icon="paletteBig" label="选项板" width={54} />
      </GroupBody>
      <GroupLabel>草绘</GroupLabel>
    </Group>
    <Group $width={212}>
      <GroupBody>
        <Tools width={125} items={[
          { icon: "mirror", label: "镜像", off: true },
          { icon: "rotate", label: "旋转调整大小", off: true },
          { icon: "modify", label: "修改" },
        ]} />
        <Tools items={[
          { icon: "deleteSeg", label: "删除段" },
          { icon: "corner", label: "拐角" },
          { icon: "divide", label: "分割" },
        ]} />
      </GroupBody>
      <GroupLabel>编辑</GroupLabel>
    </Group>
    <Group $width={202}>
      <GroupBody>
        <Tools width={65} items={[
          { icon: "vertical", label: "竖直" },
          { icon: "horizontal", label: "水平" },
          { icon: "perpendicular", label: "垂直" },
        ]} />
        <Tools width={65} items={[
          { icon: "tangent", label: "相切" },
          { icon: "midpoint", label: "中点" },
          { icon: "coincident", label: "重合" },
        ]} />
        <Tools items={[
          { icon: "symmetric", label: "对称" },
          { icon: "equal", label: "相等" },
          { icon: "parallel", label: "平行" },
        ]} />
      </GroupBody>
      <GroupLabel>约束 <Caret /></GroupLabel>
    </Group>
    <Group $width={122}>
      <GroupBody $tight>
        <Big icon="dimBig" label="尺寸" width={50} />
        <Tools items={[
          { icon: "perimeter", label: "周长" },
          { icon: "baseline", label: "基线" },
          { icon: "refDim", label: "参考" },
        ]} />
      </GroupBody>
      <GroupLabel>尺寸 <Caret /></GroupLabel>
    </Group>
    <Group $width={77}>
      <GroupBody $center><Big icon="checkReqBig" label="特征要求" width={60} /></GroupBody>
      <GroupLabel>检查 <Caret /></GroupLabel>
    </Group>
    <Group $width={107}>
      <GroupBody $center>
        <Big icon="okBig" label="确定" width={50} />
        <Big icon="cancelBig" label="取消" width={50} />
      </GroupBody>
      <GroupLabel>关闭</GroupLabel>
    </Group>
  </Ribbon>
);

/* ---------- model tree ---------- */

const Workspace = styled.main`
  flex: 1;
  display: flex;
`;

const Sidebar = styled.aside`
  flex: none;
  width: 334px;
  border-right: 3px solid #dae0df;
  background: #f8fafc;
`;

const SideTabs = styled.div`
  display: flex;
  height: 32px;
  background: #dae0df;
`;

const SideTab = styled.button<{ $active?: boolean }>`
  display: flex;
  align-items: center;
  justify-content: center;
  width: 39px;
  background: ${(p) => (p.$active ? "#f8fafc" : "transparent")};
`;

const TreeTools = styled.div`
  display: flex;
  align-items: center;
  height: 40px;
  padding-left: 14px;
`;

const TreeTool = styled.button<{ $width: number; $lead?: number; $on?: boolean }>`
  flex: none;
  display: flex;
  align-items: center;
  justify-content: center;
  width: ${(p) => p.$width}px;
  height: 30px;
  margin-left: ${(p) => p.$lead ?? 0}px;
  ${(p) => p.$on && css`
    border: 1px solid #a9abad;
    background: #dfe0e2;
  `}
`;

const Rule = styled.span`
  flex: none;
  width: 1px;
  height: 30px;
  margin: 0 4px;
  background: #b4b8ba;
`;

const FilterRow = styled.div`
  display: flex;
  align-items: center;
  height: 34px;
  padding-left: 14px;
`;

const SearchBox = styled.div`
  display: flex;
  align-items: center;
  width: 235px;
  height: 34px;
  margin: 0 7px 0 4px;
  border: 1px solid #9db0b3;
  background: #fff;
`;

const SearchInput = styled.input`
  flex: 1;
  min-width: 0;
  padding: 0 6px;
  border: 0;
  outline: 0;
  background: transparent;
`;

const ClearButton = styled.button`
  display: flex;
  padding: 0 6px;
`;

const AddButton = styled.button`
  margin-left: 13px;
`;

const Tree = styled.ul`
  margin: 0;
  padding: 6px 6px 0 0;
  list-style: none;
`;

const TreeRow = styled.li<{ $indent: number }>`
  display: flex;
  align-items: center;
  height: 24px;
  padding-left: ${(p) => p.$indent}px;
`;

const Twist = styled.button`
  display: flex;
  align-items: center;
  width: 20px;
  height: 24px;
`;

const TreeLabel = styled.a<{ $gap: number }>`
  margin-left: ${(p) => p.$gap}px;
  color: inherit;
  text-decoration: none;
`;

const NewMark = styled.svg`
  align-self: flex-start;
  margin: 2px 0 0 1px;
`;

const InsertHere = styled.li`
  height: 18px;
  padding: 5px 0 0 13px;
`;

const Twister = ({ open }: { open?: boolean }) => (
  <Twist aria-label={open ? "折叠" : "展开"}>
    <svg width="12" height="12" viewBox="0 0 12 12">
      <path d={open ? "M0 2h12L6 10z" : "M1 1l10 5-10 5z"} fill="#84888a" />
    </svg>
  </Twist>
);

const Leaf = ({ icon, label }: { icon: string; label: string }) => (
  <TreeRow $indent={38}>
    <Icon name={icon} />
    <TreeLabel $gap={6} href="#">{label}</TreeLabel>
  </TreeRow>
);

const Branch = ({ icon, label }: { icon: string; label: string }) => (
  <TreeRow $indent={18}>
    <Twister />
    <Icon name={icon} />
    <TreeLabel $gap={6} href="#">{label}</TreeLabel>
  </TreeRow>
);

const Sparkle = () => (
  <NewMark as="svg" width="11" height="11" viewBox="0 0 20 20" aria-hidden="true">{ICONS.star}</NewMark>
);

const ModelTree = () => (
  <Sidebar>
    <SideTabs>
      <SideTab $active aria-label="模型树"><Icon name="treeTab" /></SideTab>
      <SideTab aria-label="文件夹浏览器"><Icon name="folders" /></SideTab>
      <SideTab aria-label="收藏夹"><Icon name="favFolder" /></SideTab>
    </SideTabs>
    <TreeTools>
      <TreeTool $width={18} aria-label="模型"><Icon name="greenBox" size={18} box={19} /></TreeTool>
      <TreeTool $width={18} aria-label="移动"><Icon name="dots" size={18} /></TreeTool>
      <TreeTool $width={40} $lead={7} aria-label="全部展开"><Icon name="expandAll" /></TreeTool>
      <TreeTool $width={16} aria-label="全部折叠"><Icon name="collapseAll" /></TreeTool>
      <TreeTool $width={30} $lead={8} $on aria-label="显示列"><Icon name="columnsEye" /></TreeTool>
      <Rule />
      <TreeTool $width={34} aria-label="树过滤器"><Icon name="treeFilter" /></TreeTool>
      <TreeTool $width={28} aria-label="树列"><Icon name="treeColumns" /></TreeTool>
      <Rule />
      <TreeTool $width={34} aria-label="设计项"><Icon name="designItems" /></TreeTool>
      <TreeTool $width={34} aria-label="更多">
        <svg width="12" height="8" viewBox="0 0 12 8"><path d="M1 1l3 3-3 3M7 1l3 3-3 3" fill="none" stroke="#444" strokeWidth="1.500" /></svg>
      </TreeTool>
      <TreeTool $width={24} aria-label="报告">
        <svg width="24" height="24" viewBox="0 0 24 24">
          <g transform="translate(2 1)">{ICONS.report}</g>
          <path d="M23 19v4h-4z" fill="#777" />
        </svg>
      </TreeTool>
    </TreeTools>
    <FilterRow>
      <Icon name="funnel" />
      <SearchBox>
        <SearchInput type="text" aria-label="过滤" />
        <ClearButton aria-label="清除">
          <svg width="10" height="10" viewBox="0 0 10 10"><path d="M1 1l8 8M9 1l-8 8" stroke="#a3a6a8" strokeWidth="1.500" /></svg>
        </ClearButton>
      </SearchBox>
      <button aria-label="过滤选项"><Caret /></button>
      <AddButton aria-label="添加">
        <svg width="14" height="14" viewBox="0 0 14 14"><path d="M7 0v14M0 7h14" stroke="#a3a6a8" strokeWidth="4" /></svg>
      </AddButton>
    </FilterRow>
    <Tree>
      <TreeRow $indent={14}>
        <Icon name="part" size={18} box={19} />
        <TreeLabel $gap={7} href="#">风扇.PRT</TreeLabel>
      </TreeRow>
      <Branch icon="designItems" label="设计项" />
      <Leaf icon="plane" label="RIGHT" />
      <Leaf icon="plane" label="TOP" />
      <Leaf icon="plane" label="FRONT" />
      <Leaf icon="csysBrown" label="PRT_CSYS_DEF" />
      <Branch icon="extrude" label="拉伸 1" />
      <Branch icon="extrude" label="拉伸 2" />
      <Branch icon="extrude" label="拉伸 7" />
      <InsertHere>
        <svg width="312" height="8" viewBox="0 0 312 8">
          <path d="M0 4h312M1 0v8M311 0v8" stroke="#63c53a" strokeWidth="2" />
        </svg>
      </InsertHere>
      <TreeRow $indent={18}>
        <Twister open />
        <Icon name="extrude" />
        <TreeLabel $gap={5} href="#" aria-label="新建"><Sparkle /></TreeLabel>
        <TreeLabel $gap={0} href="#">拉伸 3</TreeLabel>
      </TreeRow>
      <TreeRow $indent={63}>
        <Icon name="sketch" />
        <TreeLabel $gap={5} href="#" aria-label="新建"><Sparkle /></TreeLabel>
        <TreeLabel $gap={0} href="#">截面 1</TreeLabel>
      </TreeRow>
    </Tree>
  </Sidebar>
);

/* ---------- drawing canvas ---------- */

const Canvas = styled.section`
  position: relative;
  flex: 1;
  min-width: 0;
  min-height: 722px;
  display: flex;
  justify-content: center;
  align-items: flex-start;
  background: #e9eaee;
  overflow: hidden;
`;

const Drawing = styled.svg`
  position: absolute;
  inset: 0;
  width: 100%;
  height: 100%;
`;

const ViewBar = styled.div`
  position: relative;
  display: flex;
  align-items: center;
  margin: 7px 0 0 156px;
  height: 38px;
  padding: 0 2px;
  border: 1px solid #999c9e;
  background: #f8fafc;
`;

const ViewButton = styled.button<{ $on?: boolean }>`
  position: relative;
  display: flex;
  align-items: center;
  justify-content: center;
  width: 30px;
  height: 29px;
  margin: 0 1px;
  ${(p) => p.$on && css`
    border: 1px solid #a9abad;
    background: #dfe0e2;
  `}
  ${(p) => p["aria-haspopup"] && css`
    &::after {
      content: "";
      position: absolute;
      right: 1px;
      bottom: 2px;
      border: 2px solid #666;
      border-top-color: transparent;
      border-left-color: transparent;
    }
  `}
`;

const VIEW_TOOLS: { icon: string; name: string; menu?: boolean; on?: boolean }[] = [
  { icon: "zoomFit", name: "重新调整" },
  { icon: "zoomIn", name: "放大" },
  { icon: "zoomOut", name: "缩小" },
  { icon: "refit", name: "重画" },
  { icon: "shadedBox", name: "显示样式", menu: true },
  { icon: "savedView", name: "已保存方向", menu: true },
  { icon: "camera", name: "视图管理器" },
  { icon: "boxArrow", name: "视图法向" },
  { icon: "datum", name: "基准显示", menu: true },
  { icon: "views", name: "草绘视图" },
  { icon: "ghostBox", name: "修剪模型" },
  { icon: "glassBox", name: "透视图" },
  { icon: "dimEye", name: "尺寸显示", menu: true },
  { icon: "constraintEye", name: "约束显示", menu: true },
  { icon: "annotEye", name: "注释显示", on: true },
  { icon: "spin", name: "旋转中心", on: true },
];

type BadgeKind = "h" | "v" | "eq" | "par" | "hp" | "vp" | "dp" | "end";

const BADGE_MARKS: Record<BadgeKind, React.ReactNode> = {
  h: <path d="M-8 0H8" />,
  v: <path d="M0-8V8" />,
  eq: <path d="M-6-2H6M-6 2H6" />,
  par: <path d="M-6 5L0-5M0 5L6-5" />,
  hp: <g><path d="M-8 0H8" /><circle cx="2" r="2.500" fill="#8fd6f0" stroke="#3b7f9c" strokeWidth="1" /></g>,
  vp: <g><path d="M0-8V8" /><circle cy="-3" r="2.500" fill="#8fd6f0" stroke="#3b7f9c" strokeWidth="1" /></g>,
  dp: <g><path d="M-2-5L4 6" strokeDasharray="5 1" /><circle cx="-2" cy="-6" r="2.500" fill="#8fd6f0" stroke="#3b7f9c" strokeWidth="1" /></g>,
  end: <g><path d="M-3 3L4-4" /><circle cx="5" cy="-5" r="1" fill="#333" /><path d="M-6 1h4v5h-4z" fill="#a8e2f6" stroke="#3b8fb4" strokeWidth="1" /></g>,
};

const BADGES: [BadgeKind, number, number][] = [
  ["dp", 702, 496], ["v", 679, 522], ["hp", 702, 571], ["hp", 728, 571], ["par", 679, 636],
  ["v", 706, 677], ["h", 812, 663], ["eq", 824, 714], ["eq", 813, 708], ["v", 824, 744],
  ["v", 843, 774], ["eq", 843, 801], ["h", 760, 782], ["h", 724, 850], ["h", 941, 708],
  ["par", 1034, 691], ["vp", 1079, 685], ["h", 901, 743], ["end", 1079, 737], ["end", 1057, 753],
  ["v", 1012, 761], ["eq", 1079, 785], ["eq", 1012, 814], ["end", 1076, 817], ["eq", 1046, 850],
];

const VERTICES: [number, number][] = [
  [702, 548], [728, 548], [712, 515], [728, 804], [802, 804], [702, 827], [820, 827],
  [802, 685], [824, 685], [802, 707], [1057, 685], [1057, 730], [1034, 720], [1057, 827],
];

const DimText = styled.text<{ $ink: string; $small?: boolean }>`
  font-family: "DejaVu Sans", sans-serif;
  font-weight: 200;
  font-size: ${(p) => (p.$small ? 13 : 17)}px;
  fill: ${(p) => p.$ink};
`;

const Watermark = styled.text`
  font-family: "Liberation Mono", monospace;
  font-weight: 400;
  font-size: 19px;
  fill: #cbccce;
`;

const SketchDrawing = () => (
  <Drawing viewBox="334 165 1430 722" preserveAspectRatio="xMidYMin meet" role="img" aria-label="草绘">
    <g shapeRendering="crispEdges">
      <path
        d="M934 297A279 279 0 0 1 1307 671L1330.600 767A45.500 45.500 0 0 1 1275.500 822L1180 799A279 279 0 0 1 1056.500 827V730A182 182 0 1 0 886.700 482.300L797.500 444.400L805.500 425.600L782.500 329A45.500 45.500 0 0 1 837.600 274Z"
        fill="#a0adbc"
        stroke="#15171c"
      />
      <path d="M886.700 482.300A182 182 0 1 1 1056.500 730" fill="none" stroke={TEAL} strokeDasharray="6 6" />
      <circle cx="826.500" cy="318" r="17" fill="#e9eaee" stroke="#15171c" />
      <circle cx="1286.500" cy="778" r="17" fill="#e9eaee" stroke="#15171c" />
      <path d="M1056.500 165V887M332 548.500H1764" stroke={TEAL} strokeDasharray="6 6" fill="none" />

      <path d="M702 540H728V804H802V685H1057V827H1034V720H820V827H702Z" fill="#efc0ea" />
      <path d="M703 518h12l12 22h-24zM703 694h24v25h-24zM737 805h73v21h-73zM1017 700h38v26h-38zM1035 774h20v25h-20z" fill="#e9e1ec" />

      <g stroke={CYAN} fill="none">
        <path d="M665 506.500h33M712 506.500h36M687.500 536v12M681 548.500h11M703 548.500h24" />
        <path d="M708.500 548v147M708.500 720v83M703 803.500h20" />
        <path d="M727.500 808v17M801.500 808v17M728 818.500h12M788 818.500h12" />
        <path d="M828 736.500h83M995 736.500h38M1017.500 722v50M1017.500 799v28M1011 827.500h18" />
      </g>
      <path d="M681 494.500h11M687.500 495v15" stroke="#b5deea" />
      <path d="M685.500 538h4v8h-4zM789 816.500l10 2-10 2zM1022 734.500l10 2-10 2zM690 504.500l8 2-8 2zM708.500 550l2 9h-4z" fill={CYAN} />
      <g stroke={PURPLE} fill="none">
        <path d="M801.500 632v49M802 638.500h82M969 638.500h87M1056.500 632v49" />
        <path d="M701.500 831v15M820.500 831v15M702 839.500h31M808 839.500h12" />
        <path d="M998 837.500h32M1033.500 829v14M1057 837.500h36M1054.500 715v13M1047 730.500h6" />
      </g>
      <path d="M1046 636.500l10 2-10 2zM809 837.500h8v4h-8zM1069 834.500v6l-11-3zM1053 718h4v8h-4z" fill={PURPLE} />
      <path d="M803 638.500l10-3v5zM703 839.500l10-3v5zM1029 837.500l-10-2v5zM729 818.500l10-2v4zM828 736.500l5-3v5zM1017.500 722l2 10h-5zM1054.500 698l-2-9h4zM708.500 801l-2-9h4zM714 506.500l9-3v5z" fill={GREEN} />
    </g>

    <DimText $ink={PURPLE} x="902" y="645">22.40</DimText>
    <DimText $ink={CYAN} x="930" y="742">18.75</DimText>
    <DimText $ink={PURPLE} x="1035" y="719">4.00</DimText>
    <DimText $ink={CYAN} x="999" y="793">9.42</DimText>
    <DimText $ink={CYAN} x="684" y="713">22.46</DimText>
    <DimText $ink={CYAN} x="754" y="824">6.48</DimText>
    <DimText $ink={PURPLE} x="751" y="846">10.42</DimText>
    <DimText $ink={PURPLE} x="1028" y="843">2.00</DimText>
    <DimText $ink={CYAN} x="686" y="513">0.90</DimText>
    <DimText $ink={CYAN} x="667" y="535">4.7</DimText>
    <DimText $ink={PURPLE} $small x="825" y="698">3</DimText>
    <DimText $ink={PURPLE} $small x="836" y="704">2</DimText>
    <DimText $ink={PURPLE} $small x="1091" y="776">2</DimText>
    <path d="M695.500 617v9M858.500 782v9M1050.500 672v9M1027.500 796v9" stroke={PURPLE} shapeRendering="crispEdges" />

    <path
      d="M702 500V827H820.500V720H1034V827H1056.500V685H802V804H728V548L705 501"
      fill="none"
      stroke={ORANGE}
      strokeWidth="2"
    />
    {VERTICES.map(([x, y]) => (
      <circle key={`${x}-${y}`} cx={x} cy={y} r="2" fill={CYAN} />
    ))}

    <path d="M1058.500 548v22" stroke="#2ff0f0" strokeWidth="1.500" />
    <path d="M1069 548h12" stroke="#ff3b30" />
    <circle cx="1058.500" cy="571" r="2" fill="#2ff0f0" />
    <circle cx="1081" cy="548" r="2" fill="#ff3b30" />
    <circle cx="1058.500" cy="548" r="3" fill="#20e620" />

    {BADGES.map(([kind, x, y]) => (
      <g key={`${kind}-${x}-${y}`} transform={`translate(${x} ${y})`}>
        <circle cx="1" cy="1" r="9.500" fill="#b9bbc0" />
        <circle r="9.500" fill="#f6f7f8" />
        <g fill="none" stroke="#3c3e40" strokeWidth="1.500">{BADGE_MARKS[kind]}</g>
      </g>
    ))}
    <Watermark x="1747" y="878" textAnchor="end">doit@DOIT SUPER</Watermark>
  </Drawing>
);

/* red pointer laid over the ribbon and the canvas */
const Pointer = styled.svg`
  position: absolute;
  top: 20px;
  left: 1055px;
  pointer-events: none;
`;

export default function App() {
  return (
    <>
      <GlobalStyle />
      <Page>
        <TabBar>
          {TABS.map(([label, kind]) => (
            <Tab key={label} $kind={kind}>{label}</Tab>
          ))}
        </TabBar>
        <RibbonBar />
        <Workspace>
          <ModelTree />
          <Canvas>
            <SketchDrawing />
            <ViewBar role="toolbar">
              {VIEW_TOOLS.map((t) => (
                <ViewButton key={t.name} $on={t.on} aria-label={t.name} aria-haspopup={t.menu ? "menu" : undefined}>
                  <Icon name={t.icon} />
                </ViewButton>
              ))}
            </ViewBar>
          </Canvas>
        </Workspace>
        <Pointer width="170" height="202" viewBox="1055 20 170 202" aria-hidden="true">
          <path d="M1060 23L1076 31L1074 35L1142 117L1221 220L1134 120L1066 37L1063 40Z" fill="#fb3b38" />
        </Pointer>
      </Page>
    </>
  );
}
